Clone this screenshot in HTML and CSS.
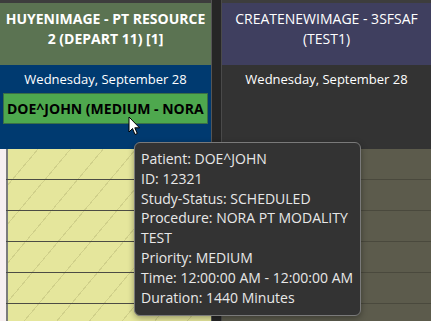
FILE: index.html
```html
<!DOCTYPE html>
<html lang="en">
<head>
  <meta charset="UTF-8">
  <meta name="viewport" content="width=device-width, initial-scale=1.0">
  <title>Scheduler</title>
  <link rel="stylesheet" href="styles.css">
</head>
<body>
  <div class="topbar"></div>

  <div class="board">
    <div class="resource">
      <div class="res-head head-green"><b>HUYENIMAGE - PT RESOURCE 2 (DEPART 11) [1]</b></div>
      <div class="res-day day-blue">
        <div class="day-title">Wednesday, September 28</div>
        <div class="appt">DOE^JOHN (MEDIUM - NORA</div>
      </div>
      <div class="slots slots-yellow">
        <div class="slot"></div>
        <div class="slot"></div>
        <div class="slot"></div>
        <div class="slot"></div>
        <div class="slot"></div>
      </div>
    </div>

    <div class="divider"></div>

    <div class="resource">
      <div class="res-head head-purple">CREATENEWIMAGE - 3SFSAF (TEST1)</div>
      <div class="res-day day-dark">
        <div class="day-title">Wednesday, September 28</div>
      </div>
      <div class="slots slots-olive">
        <div class="slot"></div>
        <div class="slot"></div>
        <div class="slot"></div>
        <div class="slot"></div>
        <div class="slot"></div>
      </div>
    </div>
  </div>

  <!-- hover tooltip over the appointment -->
  <div class="tooltip">
    <div>Patient: DOE^JOHN</div>
    <div>ID: 12321</div>
    <div>Study-Status: SCHEDULED</div>
    <div>Procedure: NORA PT MODALITY TEST</div>
    <div>Priority: MEDIUM</div>
    <div class="nowrap">Time: 12:00:00 AM - 12:00:00 AM</div>
    <div>Duration: 1440 Minutes</div>
  </div>

  <svg class="cursor" width="13" height="20" viewBox="0 0 13 20">
    <path d="M1 1 L1 16 L4.5 12.5 L7 18.5 L9.3 17.5 L6.8 11.8 L11.5 11.8 Z" fill="#fff" stroke="#000" stroke-width="1" stroke-linejoin="miter"/>
  </svg>
</body>
</html>
```

FILE: styles.css
```css
body {
  margin: 0;
  width: 431px;
  height: 321px;
  overflow: hidden;
  background: #333;
  font-family: "Open Sans", "Noto Sans", sans-serif;
  font-size: 14px;
  color: #fff;
  position: relative;
}
.topbar {
  height: 3px;
  background: #3d3d3d;
}
.board {
  display: grid;
  grid-template-columns: 211px 11px 1fr;
  height: 318px;
}
.divider {
  background: #262626;
  border-left: 1px solid #555;
  border-right: 1px solid #4a4a4a;
  margin-top: -3px;
  box-sizing: border-box;
}
.resource {
  display: flex;
  flex-direction: column;
  min-width: 0;
}
.res-head {
  height: 62px;
  padding: 6px 4px 0;
  box-sizing: border-box;
  text-align: center;
  line-height: 19.5px;
}
.head-green { background: #5b7352; }
.head-purple { background: #3f3f5f; }
.res-day {
  height: 84px;
  box-sizing: border-box;
  padding: 4px 3px 0;
}
.day-blue { background: #003a70; }
.day-dark { background: #333; }
.day-title {
  text-align: center;
  font-size: 13px;
  line-height: 20px;
  margin-bottom: 4px;
}
.appt {
  background: #4ea84e;
  border: 1px solid #3b6e46;
  color: #000;
  font-weight: bold;
  height: 31px;
  line-height: 29px;
  box-sizing: border-box;
  padding-left: 3px;
  white-space: nowrap;
  overflow: hidden;
}
.slots {
  flex: 1;
}
.slots-yellow {
  background-color: #e5e69c;
  background-image: repeating-linear-gradient(130deg, transparent 0 24px, #d0d08a 24px 25px);
  border-left: 6px solid #f7eff1;
  box-shadow: inset 2px 0 0 #7c7c7c;
}
.slots-olive {
  background: #5c5b4c;
}
.slot {
  height: 30px;
  border-bottom: 1px solid #4c4c44;
}
.slots-olive .slot {
  border-bottom-color: #4a493d;
}
.tooltip {
  position: absolute;
  left: 134px;
  top: 142px;
  width: 227px;
  box-sizing: border-box;
  padding: 6px 4px 8px 6px;
  background: #333;
  border: 1px solid #7a7a7a;
  border-radius: 6px;
  box-shadow: 0 2px 6px rgba(0,0,0,0.35);
  color: #e8e8e8;
  font-size: 14px;
  line-height: 19.8px;
}
.nowrap {
  white-space: nowrap;
}
.cursor {
  position: absolute;
  left: 128px;
  top: 116px;
}
```
